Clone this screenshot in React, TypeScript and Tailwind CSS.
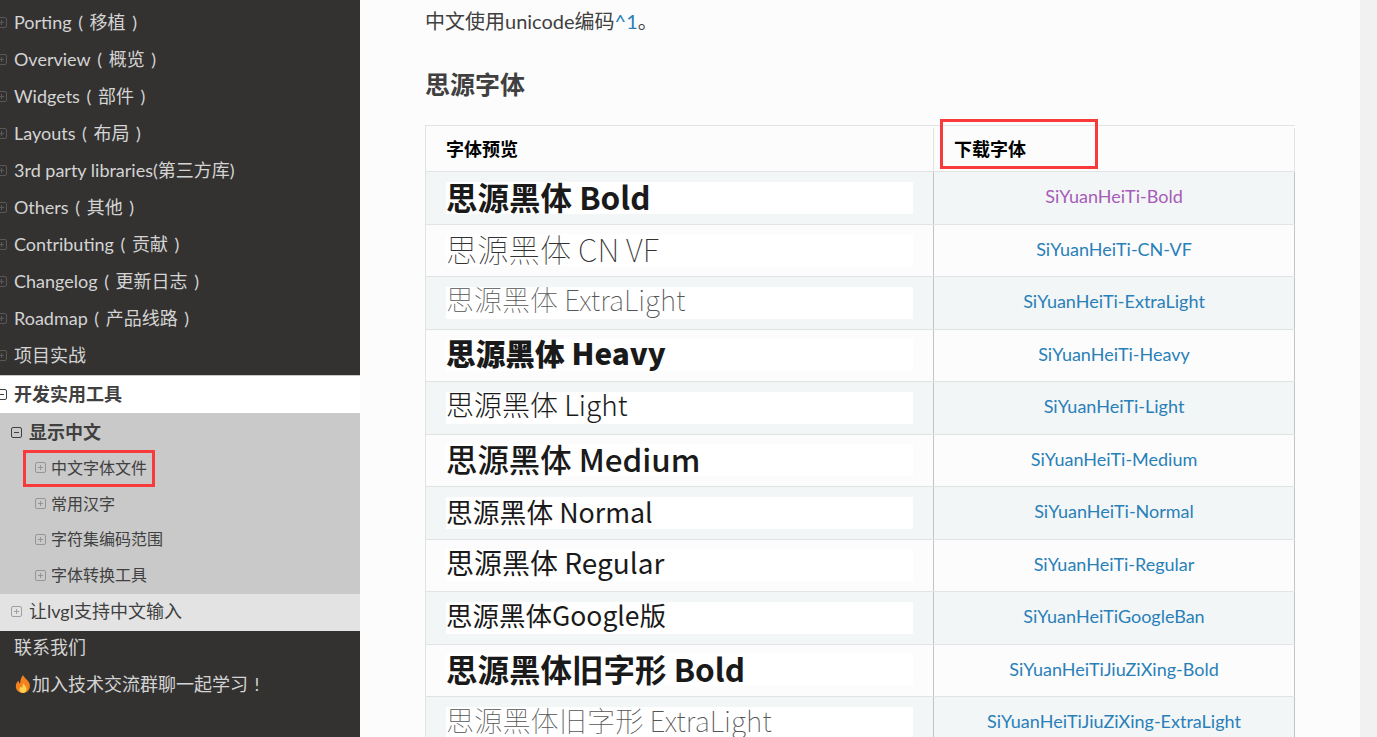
const cjk = "font-['Lato','Noto_Sans_CJK_SC',sans-serif]";

const topItems = [
  { label: 'Porting', zh: '移植' },
  { label: 'Overview', zh: '概览' },
  { label: 'Widgets', zh: '部件' },
  { label: 'Layouts', zh: '布局' },
  { label: '3rd party libraries(第三方库)' },
  { label: 'Others', zh: '其他' },
  { label: 'Contributing', zh: '贡献' },
  { label: 'Changelog', zh: '更新日志' },
  { label: 'Roadmap', zh: '产品线路' },
  { label: '项目实战' },
];

const subItems = ['中文字体文件', '常用汉字', '字符集编码范围', '字体转换工具'];

type FontRow = {
  preview: string;
  link: string;
  style: string;
  color?: string;
};

const fontRows: FontRow[] = [
  { preview: '思源黑体 Bold', link: 'SiYuanHeiTi-Bold', style: 'text-[31.5px] leading-[28px] font-bold text-[#1a1a1a]', color: 'text-[#a65cb8]' },
  { preview: '思源黑体 CN VF', link: 'SiYuanHeiTi-CN-VF', style: 'text-[31.3px] leading-[30px] font-thin text-[#333333]' },
  { preview: '思源黑体 ExtraLight', link: 'SiYuanHeiTi-ExtraLight', style: 'text-[28px] leading-[25px] font-thin text-[#555555]' },
  { preview: '思源黑体 Heavy', link: 'SiYuanHeiTi-Heavy', style: 'text-[29.7px] leading-[28px] font-black text-[#1a1a1a]' },
  { preview: '思源黑体 Light', link: 'SiYuanHeiTi-Light', style: 'text-[28px] leading-[25px] font-light text-[#1a1a1a]' },
  { preview: '思源黑体 Medium', link: 'SiYuanHeiTi-Medium', style: 'text-[31.4px] leading-[30px] font-medium text-[#1a1a1a]' },
  { preview: '思源黑体 Normal', link: 'SiYuanHeiTi-Normal', style: 'text-[26.8px] leading-[30px] font-normal text-[#1a1a1a]' },
  { preview: '思源黑体 Regular', link: 'SiYuanHeiTi-Regular', style: 'text-[28px] leading-[26px] font-normal text-[#1a1a1a]' },
  { preview: '思源黑体Google版', link: 'SiYuanHeiTiGoogleBan', style: 'text-[26.5px] leading-[26px] font-normal text-[#1a1a1a]' },
  { preview: '思源黑体旧字形 Bold', link: 'SiYuanHeiTiJiuZiXing-Bold', style: 'text-[31.5px] leading-[28px] font-bold text-[#1a1a1a]' },
  { preview: '思源黑体旧字形 ExtraLight', link: 'SiYuanHeiTiJiuZiXing-ExtraLight', style: 'text-[28.2px] leading-[26px] font-thin text-[#555555]' },
];

function Toggle({ open, className }: { open?: boolean; className: string }) {
  return (
    <svg viewBox="0 0 11 11" className={className} fill="none" stroke="currentColor" strokeWidth="1">
      <rect x="0.5" y="0.5" width="10" height="10" rx="1.5" />
      <path d="M3 5.5h5" />
      {!open && <path d="M5.5 3v5" />}
    </svg>
  );
}

function Flame() {
  return (
    <svg viewBox="0 0 18 18" className="h-[18px] w-[18px] shrink-0">
      <path d="M9 0c1 3 5 5 6.500 8.500C17 13 14 18 9 18S1 14 2 9.500c.5-2 1.500-3 2.500-4 0 1.500.5 2.500 1.500 3C6.500 5 7 2.500 9 0z" fill="#f4811f" />
      <path d="M9.500 8c.5 2 3 3.500 3 6 0 2-1.500 4-3.500 4s-3.500-1.500-3.500-3.500c0-1.500 1-2.500 1.500-3 .3.800.7 1.200 1.200 1.400C8.500 11 8.800 9.500 9.500 8z" fill="#fcd34d" />
    </svg>
  );
}

function Punct({ children }: { children: string }) {
  return <span className="inline-block w-[18px] text-center">{children}</span>;
}

function Sidebar() {
  return (
    <nav className={`flex w-[360px] shrink-0 flex-col bg-[#333231] pt-[3.6px] text-[18px] ${cjk}`}>
      {topItems.map((item) => (
        <div key={item.label} className="flex h-[37.04px] shrink-0 items-center text-[#d4d4d4]">
          <Toggle className="-ml-[4px] mr-[7px] h-[11px] w-[11px] shrink-0 text-[#595857]" />
          <span className="whitespace-nowrap">
            {item.label}
            {item.zh && (
              <>
                <Punct>(</Punct>
                {item.zh}
                <Punct>)</Punct>
              </>
            )}
          </span>
        </div>
      ))}
      <div className="mt-[1px] flex h-[38px] shrink-0 items-center border-t border-[#c9c9c9] bg-white font-bold text-[#404040]">
        <Toggle open className="-ml-[4px] mr-[7px] h-[11px] w-[11px] shrink-0 text-[#404040]" />
        <span>开发实用工具</span>
      </div>
      <div className="flex shrink-0 flex-col bg-[#c9c9c9] pb-[1px]">
        <div className="flex h-[37px] items-center pt-[3px] pl-[11px] font-bold text-[#404040]">
          <Toggle open className="mr-[7px] h-[11px] w-[11px] shrink-0 text-[#404040]" />
          <span>显示中文</span>
        </div>
        {subItems.map((item) => (
          <div key={item} className="flex h-[35.75px] items-center pl-[35px] text-[16px] text-[#404040]">
            <Toggle className="mr-[5px] h-[11px] w-[11px] shrink-0 text-[#959595]" />
            <span>{item}</span>
          </div>
        ))}
      </div>
      <div className="flex h-[37px] shrink-0 items-center bg-[#e3e3e3] pb-[2px] pl-[11px] text-[#404040]">
        <Toggle className="mr-[7px] h-[11px] w-[11px] shrink-0 text-[#a0a0a0]" />
        <span>让lvgl支持中文输入</span>
      </div>
      <div className="flex h-[37px] shrink-0 items-center pb-[4px] pl-[14px] text-[#d4d4d4]">联系我们</div>
      <div className="flex h-[37px] shrink-0 items-center pb-[4px] pl-[14px] text-[#d4d4d4]">
        <Flame />
        <span>
          加入技术交流群聊一起学习
          <Punct>!</Punct>
        </span>
      </div>
    </nav>
  );
}

function FontTable() {
  return (
    <div className="w-[870px] border-t border-l border-[#e1e4e5]">
      <div className="flex h-[46px] border-b border-[#e1e4e5] pt-[2px] text-[18px] font-bold text-black">
        <div className="flex w-[508px] shrink-0 items-center border-r border-[#e1e4e5] pl-[20px]">字体预览</div>
        <div className="flex flex-1 items-center border-r border-[#e1e4e5] pl-[20px]">下载字体</div>
      </div>
      {fontRows.map((row, i) => (
        <div key={row.link} className={`flex h-[52.5px] border-b border-[#e1e4e5] ${i % 2 === 0 ? 'bg-[#f3f6f6]' : 'bg-[#fcfcfc]'}`}>
          <div className="flex w-[508px] shrink-0 items-center border-r border-[#c4c4c4] pl-[20px]">
            <div className={`h-[32px] w-[467px] whitespace-nowrap bg-white font-['Noto_Sans_CJK_SC',sans-serif] ${row.style}`}>
              {row.preview}
            </div>
          </div>
          <div className={`flex flex-1 items-center justify-center border-r border-[#c4c4c4] pb-[2px] text-[18px] ${row.color ?? 'text-[#2980b9]'}`}>
            {row.link}
          </div>
        </div>
      ))}
    </div>
  );
}

export default function App() {
  return (
    <div className={`relative flex h-[737px] w-[1377px] overflow-hidden bg-[#fcfcfc] ${cjk}`}>
      <Sidebar />
      <main className="min-w-0 flex-1 pl-[65px] text-[#404040]">
        <p className="flex h-[42px] items-center text-[20px]">
          中文使用unicode编码<span className="text-[#2980b9]">^1</span>。
        </p>
        <h2 className="mt-[22px] mb-[21px] text-[25px] leading-[40px] font-bold">思源字体</h2>
        <FontTable />
      </main>
      <div className="w-[17px] shrink-0 bg-[#f1f1f1]" />
      <div className="absolute top-[450px] left-[23px] h-[37px] w-[132px] border-[3px] border-[#f93a3a]" />
      <div className="absolute top-[119px] left-[940px] h-[50px] w-[158px] border-[3px] border-[#f93a3a]" />
    </div>
  );
}
